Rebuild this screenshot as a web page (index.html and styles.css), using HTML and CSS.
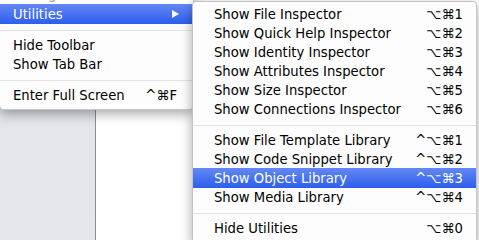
FILE: index.html
```html
<!DOCTYPE html>
<html>
<head>
<meta charset="utf-8">
<link rel="stylesheet" href="styles.css">
</head>
<body>
<div class="desk">
  <div class="pane-left"></div>
  <div class="pane-right"></div>
</div>

<div class="menu menu-main">
  <div class="item ghost"><span class="label">Debug Area</span></div>
  <div class="item active"><span class="label">Utilities</span><span class="arrow"></span></div>
  <div class="sep"></div>
  <div class="item"><span class="label">Hide Toolbar</span></div>
  <div class="item"><span class="label">Show Tab Bar</span></div>
  <div class="sep"></div>
  <div class="item"><span class="label">Enter Full Screen</span><span class="key">^⌘F</span></div>
</div>

<div class="menu menu-sub">
  <div class="item"><span class="label">Show File Inspector</span><span class="key">⌥⌘1</span></div>
  <div class="item"><span class="label">Show Quick Help Inspector</span><span class="key">⌥⌘2</span></div>
  <div class="item"><span class="label">Show Identity Inspector</span><span class="key">⌥⌘3</span></div>
  <div class="item"><span class="label">Show Attributes Inspector</span><span class="key">⌥⌘4</span></div>
  <div class="item"><span class="label">Show Size Inspector</span><span class="key">⌥⌘5</span></div>
  <div class="item"><span class="label">Show Connections Inspector</span><span class="key">⌥⌘6</span></div>
  <div class="sep"></div>
  <div class="item"><span class="label">Show File Template Library</span><span class="key">^⌥⌘1</span></div>
  <div class="item"><span class="label">Show Code Snippet Library</span><span class="key">^⌥⌘2</span></div>
  <div class="item active"><span class="label">Show Object Library</span><span class="key">^⌥⌘3</span></div>
  <div class="item"><span class="label">Show Media Library</span><span class="key">^⌥⌘4</span></div>
  <div class="sep"></div>
  <div class="item"><span class="label">Hide Utilities</span><span class="key">⌥⌘0</span></div>
</div>
</body>
</html>
```

FILE: styles.css
```css
html, body {
  margin: 0;
  padding: 0;
  width: 479px;
  height: 240px;
  overflow: hidden;
  font-family: "DejaVu Sans", "Liberation Sans", sans-serif;
  font-size: 13.2px;
  color: #000;
}

.desk {
  display: flex;
  width: 479px;
  height: 240px;
}

.pane-left {
  width: 95px;
  background: linear-gradient(#d6d9de, #e2e5e9 40%, #e3e6ea);
  border-right: 1px solid #8c8c8c;
}

.pane-right {
  flex: 1;
  background: #ffffff;
}

.menu {
  position: absolute;
  background: #fdfdfd;
  box-shadow: 0 4px 12px rgba(0, 0, 0, 0.35);
  box-sizing: border-box;
}

.menu-main {
  left: -1px;
  top: -15px;
  width: 195px;
  padding: 0 0 4px 0;
  border-radius: 0 0 5px 5px;
  border: 1px solid #c8c8c8;
  border-top: none;
}

.menu-sub {
  left: 192px;
  top: 1px;
  width: 285px;
  padding: 3px 0 4px 0;
  border: 1px solid #c3c3c3;
  border-radius: 4px;
}

.item {
  display: flex;
  align-items: center;
  height: 19px;
  line-height: 19px;
  padding: 0 16px 0 13px;
  white-space: nowrap;
}

.item.ghost {
  color: #9a9a9a;
}

.menu-sub .item {
  padding: 0 13px 0 21px;
}

.item.active {
  background: linear-gradient(#6488f3, #2c5eee);
  color: #fff;
  height: 20px;
}

.menu-sub .item.active {
  height: 20px;
  margin-top: -1px;
}

.key {
  margin-left: auto;
}

.arrow {
  margin-left: auto;
  width: 0;
  height: 0;
  border-left: 7px solid #fff;
  border-top: 4px solid transparent;
  border-bottom: 4px solid transparent;
  margin-right: -2px;
}

.sep {
  height: 12px;
  display: flex;
  align-items: center;
}

.sep::before {
  content: "";
  flex: 1;
  height: 1px;
  background: #e2e2e2;
}
```
